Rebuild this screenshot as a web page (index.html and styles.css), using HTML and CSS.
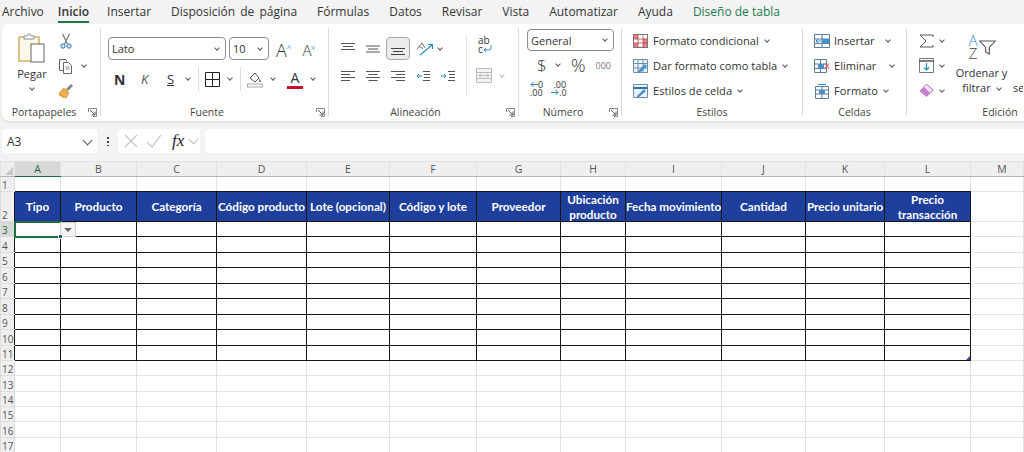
FILE: index.html
```html
<!DOCTYPE html>
<html>
<head>
    <title>Libro1 - Excel</title>
    <link rel="stylesheet" href="styles.css">
</head>
<body>
    <svg class="sprite" width="0" height="0">
        <symbol id="launcher" viewBox="0 0 9 9">
            <path d="M.5 4V.5h8v8H5" fill="none" stroke="#888"/>
            <path d="M2 2l5 5M7 3.5V7H3.5" fill="none" stroke="#555"/>
        </symbol>
    </svg>

    <nav class="tabs">
        <span class="tab">Archivo</span>
        <span class="tab active">Inicio</span>
        <span class="tab">Insertar</span>
        <span class="tab wide">Disposición de página</span>
        <span class="tab">Fórmulas</span>
        <span class="tab">Datos</span>
        <span class="tab">Revisar</span>
        <span class="tab">Vista</span>
        <span class="tab">Automatizar</span>
        <span class="tab">Ayuda</span>
        <span class="tab green">Diseño de tabla</span>
    </nav>

    <section class="ribbon">
        <div class="group g-clip">
            <div class="body clip-body">
                <div class="paste">
                    <svg width="28" height="30" viewBox="0 0 28 30">
                        <rect x="1" y="4" width="20" height="24" fill="#fdf8ec" stroke="#d8b36c" stroke-width="1.6"/>
                        <path d="M6 6V3h3a2 2 0 0 1 4 0h3v3z" fill="#fff" stroke="#8a8a8a"/>
                        <rect x="13" y="11" width="13" height="18" fill="#fff" stroke="#666"/>
                    </svg>
                    <span class="paste-text">Pegar</span>
                    <i class="chev"></i>
                </div>
                <div class="stack">
                    <div class="row-s cut">
                        <svg width="12" height="16" viewBox="0 0 12 16">
                            <path d="M2.500 1l5 10M9.500 1l-5 10" stroke="#777" stroke-width="1.200" fill="none"/>
                            <circle cx="3" cy="13" r="2.200" fill="#cfe2f3" stroke="#3a78b5"/>
                            <circle cx="9" cy="13" r="2.200" fill="#cfe2f3" stroke="#3a78b5"/>
                        </svg>
                    </div>
                    <div class="row-s">
                        <svg width="16" height="16" viewBox="0 0 16 16">
                            <path d="M5 12.500H1.500V1.500H8l1 2" fill="none" stroke="#666"/>
                            <path d="M5.500 4.500h5l3 3v8h-8z" fill="#fff" stroke="#666"/>
                            <path d="M7.500 9h4M7.500 11h4" stroke="#888"/>
                        </svg>
                        <i class="chev copy-chev"></i>
                    </div>
                    <div class="row-s">
                        <svg width="16" height="16" viewBox="0 0 16 16">
                            <path d="M1 10l5-5 5 5-3 5-2-1-1 1-1-2-2 0z" fill="#eeb04e" stroke="#c98a2c" stroke-width=".7"/>
                            <path d="M8 6l5-5 2 2-5 5z" fill="#888"/>
                        </svg>
                    </div>
                </div>
            </div>
            <div class="label">Portapapeles<svg class="launch"><use href="#launcher"/></svg></div>
        </div>

        <div class="group g-font">
            <div class="body">
                <div class="font-top">
                    <div class="combo font-name">Lato<i class="chev"></i></div>
                    <div class="combo font-size">10<i class="chev"></i></div>
                    <span class="grow-a">A<b class="up">^</b></span>
                    <span class="shrink-a">A<b class="down">^</b></span>
                </div>
                <div class="font-bottom">
                    <span class="t-n">N</span>
                    <span class="t-k">K</span>
                    <span class="t-s">S</span>
                    <i class="chev s-chev"></i>
                    <span class="vsep"></span>
                    <svg width="15" height="15" viewBox="0 0 15 15">
                        <path d="M.5.500h14v14H.5zM7.500.5v14M.5 7.500h14" fill="none" stroke="#222"/>
                    </svg>
                    <i class="chev"></i>
                    <span class="vsep"></span>
                    <svg width="16" height="17" viewBox="0 0 16 17">
                        <path d="M3 7l5-5 4 5-4 4z" fill="#fff" stroke="#555"/>
                        <path d="M12 7l2 3v1h-2z" fill="#777"/>
                        <rect x=".5" y="13" width="15" height="3" fill="#fff" stroke="#aaa"/>
                    </svg>
                    <i class="chev"></i>
                    <span class="t-color">A</span>
                    <i class="chev"></i>
                </div>
            </div>
            <div class="label">Fuente<svg class="launch"><use href="#launcher"/></svg></div>
        </div>

        <div class="group g-align">
            <div class="body align-body">
                <div class="align-main">
                    <div class="align-top">
                        <svg width="14" height="14" viewBox="0 0 14 14"><path d="M0 1.500h14M2 4.500h10M0 7.500h14" stroke="#555"/></svg>
                        <svg width="14" height="14" viewBox="0 0 14 14"><path d="M0 4h14M2 7h10M0 10h14" stroke="#555"/></svg>
                        <span class="selected">
                            <svg width="14" height="14" viewBox="0 0 14 14"><path d="M0 6.500h14M2 9.500h10M0 12.500h14" stroke="#444"/></svg>
                        </span>
                        <svg width="18" height="16" viewBox="0 0 18 16">
                            <path d="M1 8l5-6 3 5M3 5.500l4 2" fill="none" stroke="#777"/>
                            <path d="M4 14L16 4M12 3.500h4.500V8" fill="none" stroke="#2b8cc4" stroke-width="1.200"/>
                        </svg>
                        <i class="chev turn-chev"></i>
                    </div>
                    <div class="align-bottom">
                        <svg width="14" height="14" viewBox="0 0 14 14"><path d="M0 1.500h14M0 4.500h9M0 7.500h14M0 10.500h9" stroke="#555"/></svg>
                        <svg width="14" height="14" viewBox="0 0 14 14"><path d="M0 1.500h14M2.500 4.500h9M0 7.500h14M2.500 10.500h9" stroke="#555"/></svg>
                        <svg width="14" height="14" viewBox="0 0 14 14"><path d="M0 1.500h14M5 4.500h9M0 7.500h14M5 10.500h9" stroke="#555"/></svg>
                        <svg width="14" height="14" viewBox="0 0 14 14"><path d="M7 1.500h7M8 4.500h6M8 7.500h6M7 10.500h7" stroke="#555"/><path d="M6 6H1M3 4L1 6l2 2" fill="none" stroke="#2b8cc4"/></svg>
                        <svg width="14" height="14" viewBox="0 0 14 14"><path d="M7 1.500h7M8 4.500h6M8 7.500h6M7 10.500h7" stroke="#555"/><path d="M0 6h5M3 4l2 2-2 2" fill="none" stroke="#2b8cc4"/></svg>
                    </div>
                </div>
                <div class="align-side">
                    <span class="wrap-t">ab<br>c<svg width="9" height="8" viewBox="0 0 9 8"><path d="M8 0v3a2 2 0 0 1-2 2H1M3 3L1 5l2 2" fill="none" stroke="#2b8cc4"/></svg></span>
                    <div class="merge">
                        <svg width="16" height="15" viewBox="0 0 16 15">
                            <path d="M.5.500h15v14H.5zM.5 4.500h15M.5 10.500h15" fill="#f4f4f4" stroke="#bbb"/>
                            <path d="M3 7.500h10M5 5.500l-2 2 2 2M11 5.500l2 2-2 2" fill="none" stroke="#bbb"/>
                        </svg>
                        <i class="chev pale"></i>
                    </div>
                </div>
            </div>
            <div class="label">Alineación<svg class="launch"><use href="#launcher"/></svg></div>
        </div>

        <div class="group g-num">
            <div class="body">
                <div class="combo num-format">General<i class="chev"></i></div>
                <div class="num-row">
                    <span class="dollar">$</span>
                    <i class="chev"></i>
                    <span class="percent">%</span>
                    <span class="thousands">000</span>
                </div>
                <div class="num-row num-dec">
                    <span class="dec"><svg width="8" height="7" viewBox="0 0 8 7"><path d="M8 3.500H1M3.500 1L1 3.500 3.500 6" fill="none" stroke="#2b8cc4"/></svg><b>0</b><br>.00</span>
                    <span class="dec">&nbsp;.00<br><svg width="8" height="7" viewBox="0 0 8 7"><path d="M0 3.500h7M4.500 1L7 3.500 4.500 6" fill="none" stroke="#2b8cc4"/></svg><b>.0</b></span>
                </div>
            </div>
            <div class="label">Número<svg class="launch"><use href="#launcher"/></svg></div>
        </div>

        <div class="group g-styles">
            <div class="body list">
                <div class="list-row">
                    <svg width="15" height="14" viewBox="0 0 15 14">
                        <rect x=".5" y=".5" width="14" height="13" fill="#fff" stroke="#777"/>
                        <path d="M1 1h4v4H1zM10 5h4v8h-4zM1 9h4v4H1z" fill="#e8808c"/>
                        <path d="M5 .5v13M10 .5v13M.5 5h14M.5 9h14" stroke="#a33" stroke-width=".7"/>
                    </svg>
                    Formato condicional<i class="chev"></i>
                </div>
                <div class="list-row">
                    <svg width="15" height="14" viewBox="0 0 15 14">
                        <path d="M.5.500h14v13H.5zM.5 4.500h14M.5 9h14M5 .5v13M10 .5v13" fill="#eaf3fa" stroke="#6f8ea5"/>
                        <path d="M5 12l7-7 2 2-7 7H5z" fill="#4b90c8"/>
                    </svg>
                    Dar formato como tabla<i class="chev"></i>
                </div>
                <div class="list-row">
                    <svg width="15" height="14" viewBox="0 0 15 14">
                        <path d="M.5.500h14v13H.5z" fill="#eaf3fa" stroke="#6f8ea5"/>
                        <path d="M.5 4h14" stroke="#2f6ea8" stroke-width="2"/>
                        <path d="M4 12l7-7 2 2-7 6H4z" fill="#4b90c8"/>
                    </svg>
                    Estilos de celda<i class="chev"></i>
                </div>
            </div>
            <div class="label">Estilos</div>
        </div>

        <div class="group g-cells">
            <div class="body list">
                <div class="list-row">
                    <svg width="16" height="14" viewBox="0 0 16 14">
                        <path d="M.5.500h15v13H.5zM.5 5h15M.5 9.500h15M8 .5v13" fill="#fff" stroke="#5b7f96"/>
                        <rect x="8" y="5" width="7" height="4.500" fill="#4b90c8"/>
                        <path d="M7 7H2M4 5L2 7l2 2" fill="none" stroke="#2b8cc4"/>
                    </svg>
                    <span class="cell-name c-ins">Insertar</span><i class="chev"></i>
                </div>
                <div class="list-row">
                    <svg width="16" height="14" viewBox="0 0 16 14">
                        <path d="M.5.500h12v13H.5zM.5 5h12M.5 9.500h12M6.500 .5v13" fill="#fff" stroke="#5b7f96"/>
                        <rect x="4" y="5" width="6" height="4.500" fill="#4b90c8"/>
                        <path d="M11 4.500l4 5M15 4.500l-4 5" stroke="#e0506a" stroke-width="1.200"/>
                    </svg>
                    <span class="cell-name c-del">Eliminar</span><i class="chev"></i>
                </div>
                <div class="list-row">
                    <svg width="16" height="16" viewBox="0 0 16 16">
                        <path d="M1.500 3.500h13v12h-13zM1.500 7h13M1.500 11h13M8 3.500v12" fill="#fff" stroke="#5b7f96"/>
                        <rect x="5" y="7" width="6" height="4" fill="#4b90c8"/>
                        <path d="M4 1.500h8" stroke="#2b8cc4"/>
                    </svg>
                    <span class="cell-name c-fmt">Formato</span><i class="chev"></i>
                </div>
            </div>
            <div class="label">Celdas</div>
        </div>

        <div class="group g-edit">
            <div class="body edit-body">
                <div class="stack edit-stack">
                    <div class="row-s edit-row">
                        <svg width="15" height="14" viewBox="0 0 15 14"><path d="M14 3V1H1l6 6-6 6h13v-2" fill="none" stroke="#555"/></svg>
                        <i class="chev"></i>
                    </div>
                    <div class="row-s edit-row">
                        <svg width="15" height="15" viewBox="0 0 15 15">
                            <path d="M.5.500h14v14H.5z" fill="#fff" stroke="#777"/>
                            <path d="M.5 3h14" stroke="#555" stroke-width="1.500"/>
                            <path d="M7.500 5v7M5 9.500l2.500 2.500L10 9.500" fill="none" stroke="#2b8cc4" stroke-width="1.200"/>
                        </svg>
                        <i class="chev"></i>
                    </div>
                    <div class="row-s edit-row">
                        <svg width="16" height="15" viewBox="0 0 16 15">
                            <path d="M1 8l7-7 7 6-7 7z" fill="#c97fd0" stroke="#a75cae" stroke-width=".7"/>
                            <path d="M8 1l7 6-3.500 3.500L5 4z" fill="#f4e3f5" stroke="#a75cae" stroke-width=".7"/>
                        </svg>
                        <i class="chev"></i>
                    </div>
                </div>
                <div class="sort">
                    <div class="sort-icon">
                        <span class="az"><span class="sort-a">A</span><span class="sort-z">Z</span></span>
                        <svg width="17" height="15" viewBox="0 0 17 15">
                            <path d="M.7 1h15.600l-6 6.500v6.500l-3.600-2V7.500z" fill="#fff" stroke="#555" stroke-width="1.100"/>
                        </svg>
                    </div>
                    <span class="sort-text">Ordenar y</span>
                    <span class="sort-text">filtrar<i class="chev"></i></span>
                </div>
                <span class="cut-text">se</span>
            </div>
            <div class="label">Edición</div>
        </div>
    </section>

    <section class="formula">
        <div class="namebox">A3<i class="chev big"></i></div>
        <span class="dots"></span>
        <div class="fx-box">
            <svg width="14" height="14" viewBox="0 0 14 14"><path d="M1 1l12 12M13 1L1 13" stroke="#c4c4c4" stroke-width="1.200"/></svg>
            <svg width="16" height="14" viewBox="0 0 16 14"><path d="M1 8l5 5L15 1" fill="none" stroke="#c4c4c4" stroke-width="1.200"/></svg>
            <span class="fx">fx</span>
            <i class="chev big pale"></i>
        </div>
        <div class="fx-input"></div>
    </section>

    <table class="sheet">
        <colgroup>
            <col class="c0"><col class="c1"><col class="c2"><col class="c3"><col class="c4"><col class="c5"><col class="c6">
            <col class="c7"><col class="c8"><col class="c9"><col class="c10"><col class="c11"><col class="c12"><col>
        </colgroup>
        <tr class="letters">
            <td class="corner"><i></i></td><td class="on">A</td><td>B</td><td>C</td><td>D</td><td>E</td><td>F</td><td>G</td><td>H</td><td>I</td><td>J</td><td>K</td><td>L</td><td class="col-m">M</td>
        </tr>
        <tr class="r15 above"><td class="rh">1</td><td></td><td></td><td></td><td></td><td></td><td></td><td></td><td></td><td></td><td></td><td></td><td></td><td class="m"></td></tr>
        <tr class="r30 data">
            <td class="rh">2</td>
            <th>Tipo</th><th>Producto</th><th>Categoría</th><th class="one-line">Código producto</th><th class="one-line">Lote (opcional)</th><th>Código y lote</th><th>Proveedor</th>
            <th>Ubicación producto</th><th class="one-line">Fecha movimiento</th><th>Cantidad</th><th class="one-line">Precio unitario</th><th>Precio transacción</th>
            <td class="m"></td>
        </tr>
        <tr class="r15 data"><td class="rh on">3</td><td class="active"><span class="filter"><i></i></span><span class="handle"></span></td><td></td><td></td><td></td><td></td><td></td><td></td><td></td><td></td><td></td><td></td><td></td><td class="m"></td></tr>
        <tr class="r16 data"><td class="rh">4</td><td></td><td></td><td></td><td></td><td></td><td></td><td></td><td></td><td></td><td></td><td></td><td></td><td class="m"></td></tr>
        <tr class="r15 data"><td class="rh">5</td><td></td><td></td><td></td><td></td><td></td><td></td><td></td><td></td><td></td><td></td><td></td><td></td><td class="m"></td></tr>
        <tr class="r16 data"><td class="rh">6</td><td></td><td></td><td></td><td></td><td></td><td></td><td></td><td></td><td></td><td></td><td></td><td></td><td class="m"></td></tr>
        <tr class="r15 data"><td class="rh">7</td><td></td><td></td><td></td><td></td><td></td><td></td><td></td><td></td><td></td><td></td><td></td><td></td><td class="m"></td></tr>
        <tr class="r16 data"><td class="rh">8</td><td></td><td></td><td></td><td></td><td></td><td></td><td></td><td></td><td></td><td></td><td></td><td></td><td class="m"></td></tr>
        <tr class="r15 data"><td class="rh">9</td><td></td><td></td><td></td><td></td><td></td><td></td><td></td><td></td><td></td><td></td><td></td><td></td><td class="m"></td></tr>
        <tr class="r16 data"><td class="rh">10</td><td></td><td></td><td></td><td></td><td></td><td></td><td></td><td></td><td></td><td></td><td></td><td></td><td class="m"></td></tr>
        <tr class="r15 data"><td class="rh">11</td><td></td><td></td><td></td><td></td><td></td><td></td><td></td><td></td><td></td><td></td><td></td><td class="corner-cell"><span class="resize"></span></td><td class="m"></td></tr>
        <tr class="r15"><td class="rh">12</td><td></td><td></td><td></td><td></td><td></td><td></td><td></td><td></td><td></td><td></td><td></td><td></td><td></td></tr>
        <tr class="r16"><td class="rh">13</td><td></td><td></td><td></td><td></td><td></td><td></td><td></td><td></td><td></td><td></td><td></td><td></td><td></td></tr>
        <tr class="r15"><td class="rh">14</td><td></td><td></td><td></td><td></td><td></td><td></td><td></td><td></td><td></td><td></td><td></td><td></td><td></td></tr>
        <tr class="r15"><td class="rh">15</td><td></td><td></td><td></td><td></td><td></td><td></td><td></td><td></td><td></td><td></td><td></td><td></td><td></td></tr>
        <tr class="r16"><td class="rh">16</td><td></td><td></td><td></td><td></td><td></td><td></td><td></td><td></td><td></td><td></td><td></td><td></td><td></td></tr>
        <tr class="r15"><td class="rh">17</td><td></td><td></td><td></td><td></td><td></td><td></td><td></td><td></td><td></td><td></td><td></td><td></td><td></td></tr>
    </table>
</body>
</html>
```

FILE: styles.css
```css
* {
    box-sizing: border-box;
}

html, body {
    height: 100%;
}

body {
    margin: 0;
    background: #f3f3f3;
    font-family: "Open Sans", "Liberation Sans", sans-serif;
    font-size: 11.1px;
    color: #333;
    overflow: hidden;
}

.sprite {
    display: block;
    height: 0;
}

/* tabs */
.tabs {
    display: flex;
    height: 24px;
    padding-left: 2px;
    gap: 20px;
    align-items: center;
    font-size: 12px;
    background: #f3f3f3;
}

.tab {
    position: relative;
    white-space: nowrap;
    line-height: 22px;
}

.tab.active {
    margin: 0 -2px 0 -6px;
    font-weight: 600;
}

.tab.wide {
    word-spacing: 2px;
}

.tab.active::after {
    content: "";
    position: absolute;
    left: 0;
    right: 0;
    bottom: 0;
    height: 2px;
    background: #217346;
}

.tab.green {
    color: #1f7a4d;
}

/* ribbon */
.ribbon {
    display: flex;
    height: 97px;
    margin-left: 2px;
    padding-top: 4px;
    background: #fff;
    border-radius: 7px 0 0 7px;
    box-shadow: 0 1px 2px rgba(0, 0, 0, 0.12);
}

.group {
    display: flex;
    flex-direction: column;
    height: 88px;
    border-right: 1px solid #dcdcdc;
}

.g-clip { width: 99px; }
.g-font { width: 228px; }
.g-align { width: 190px; }
.g-num { width: 103px; }
.g-styles { width: 181px; }
.g-cells { width: 104px; }
.g-edit { width: 116px; border-right: 0; overflow: hidden; }

.g-clip .label { padding-right: 14px; }
.g-font .label { padding-right: 15px; }
.g-align .label { padding-right: 16px; }
.g-num .label { padding-right: 14px; }
.g-edit .label { padding-left: 70px; }

.body {
    height: 75px;
}

.label {
    position: relative;
    height: 13px;
    line-height: 18px;
    font-size: 10.5px;
    text-align: center;
    color: #444;
}

.launch {
    position: absolute;
    right: 3px;
    top: 5px;
    width: 9px;
    height: 9px;
}

.chev {
    display: inline-block;
    width: 4px;
    height: 4px;
    margin: 0 0 2px 4px;
    border-right: 1px solid #555;
    border-bottom: 1px solid #555;
    transform: rotate(45deg);
    flex: none;
}

.chev.pale {
    border-color: #bbb;
}

.chev.big {
    width: 7px;
    height: 7px;
}

/* portapapeles */
.clip-body {
    display: flex;
    padding-left: 10px;
}

.paste {
    display: flex;
    flex-direction: column;
    align-items: center;
    width: 40px;
    padding-top: 5px;
}

.paste-text {
    margin-top: 3px;
    line-height: 16px;
}

.paste .chev {
    margin: 4px 0 0;
}

.stack {
    display: flex;
    flex-direction: column;
}

.clip-body .stack {
    margin-left: 6px;
}

.row-s {
    display: flex;
    align-items: center;
    height: 25px;
}

.cut {
    padding-left: 2px;
}

.copy-chev {
    margin-left: 8px;
}

/* fuente */
.g-font .body {
    padding: 9px 0 0 7px;
}

.font-top {
    display: flex;
    align-items: center;
    gap: 3px;
}

.combo {
    display: flex;
    align-items: center;
    justify-content: space-between;
    height: 23px;
    padding: 0 6px 0 3px;
    background: #fff;
    border: 1px solid #8d8d8d;
    border-radius: 4px;
    font-size: 11px;
}

.font-name {
    width: 118px;
}

.font-size {
    width: 40px;
}

.grow-a, .shrink-a {
    line-height: 20px;
    font-weight: 300;
    white-space: nowrap;
}

.grow-a {
    margin-left: 4px;
    font-size: 18px;
}

.shrink-a {
    margin-left: 8px;
    font-size: 15px;
}

.up, .down {
    display: inline-block;
    font-size: 8px;
    font-weight: 400;
    vertical-align: 6px;
    color: #2b8cc4;
}

.down {
    transform: rotate(180deg);
}

.font-bottom {
    display: flex;
    align-items: center;
    height: 22px;
    margin-top: 8px;
    padding-left: 6px;
}

.t-n {
    width: 27px;
    font-size: 14px;
    font-weight: 700;
}

.t-k {
    width: 26px;
    font-size: 13px;
    font-style: italic;
    color: #555;
}

.t-s {
    width: 15px;
    font-size: 13px;
    text-decoration: underline;
}

.vsep {
    width: 1px;
    height: 24px;
    margin: 0 6px 0 8px;
    background: #dcdcdc;
}

.font-bottom .chev {
    margin-left: 8px;
}

.font-bottom .s-chev {
    margin-left: 4px;
}

.t-color {
    width: 16px;
    margin-left: 12px;
    font-size: 14px;
    line-height: 17px;
    text-align: center;
    border-bottom: 3px solid #c8102e;
}

/* alineacion */
.align-body {
    display: flex;
    padding-left: 12px;
}

.align-main {
    width: 125px;
    padding-top: 9px;
}

.align-top {
    display: flex;
    align-items: center;
    gap: 11px;
    height: 23px;
}

.selected {
    display: flex;
    align-items: center;
    justify-content: center;
    width: 24px;
    height: 23px;
    margin: 0 -5px 0 -5px;
    background: #ececec;
    border: 1px solid #a8a8a8;
    border-radius: 4px;
}

.turn-chev {
    margin-left: -7px;
}

.align-bottom {
    display: flex;
    align-items: center;
    gap: 11px;
    height: 22px;
    margin-top: 6px;
}

.align-side {
    display: flex;
    flex-direction: column;
    height: 60px;
    margin-top: 8px;
    padding-left: 9px;
    border-left: 1px solid #e4e4e4;
}

.wrap-t {
    font-size: 10px;
    line-height: 9px;
    padding-left: 2px;
}

.merge {
    display: flex;
    align-items: center;
    margin-top: 14px;
}

.merge .chev {
    margin-left: 8px;
}

/* numero */
.g-num .body {
    padding: 1px 0 0 8px;
}

.num-format {
    width: 87px;
    height: 22px;
}

.num-row {
    display: flex;
    align-items: center;
    height: 20px;
    margin-top: 4px;
    padding-left: 10px;
}

.dollar {
    width: 15px;
    font-size: 17px;
    font-weight: 300;
}

.percent {
    margin-left: 11px;
    font-size: 18px;
    font-weight: 300;
}

.thousands {
    margin-left: 10px;
    font-size: 9px;
    color: #777;
}

.num-dec {
    gap: 8px;
    padding-left: 3px;
}

.dec {
    font-size: 9px;
    line-height: 8px;
    white-space: nowrap;
}

.dec b {
    font-weight: 400;
}

/* estilos y celdas */
.list {
    display: flex;
    flex-direction: column;
}

.list-row {
    display: flex;
    align-items: center;
    gap: 5px;
    height: 25px;
    padding-left: 11px;
    white-space: nowrap;
}

.list-row .chev {
    margin-left: 1px;
}

.g-cells .list-row {
    gap: 4px;
}

.c-ins {
    width: 47px;
}

.c-del {
    width: 51px;
}

.c-fmt {
    width: 45px;
}

/* edicion */
.edit-body {
    display: flex;
    padding-left: 12px;
}

.edit-stack {
    width: 37px;
    flex: none;
}

.edit-row svg {
    width: 15px;
}

.edit-row .chev {
    margin-left: 6px;
}

.sort {
    display: flex;
    flex-direction: column;
    align-items: center;
    width: 51px;
    flex: none;
    padding-top: 6px;
    line-height: 15px;
    font-size: 11px;
    white-space: nowrap;
}

.sort-icon {
    display: flex;
    align-items: center;
    height: 26px;
    margin-bottom: 5px;
}

.az {
    display: flex;
    flex-direction: column;
    align-items: center;
    width: 11px;
    font-size: 15px;
    font-weight: 300;
    line-height: 13px;
}

.sort-a {
    color: #2b8cc4;
}

.sort-z {
    color: #444;
}

.sort .chev {
    margin-left: 6px;
}

.cut-text {
    margin: 52px 0 0 6px;
    font-size: 11px;
    line-height: 15px;
}

/* barra de formulas */
.formula {
    display: flex;
    align-items: center;
    height: 40px;
    padding: 0 0 0 2px;
}

.namebox {
    display: flex;
    align-items: center;
    justify-content: space-between;
    width: 95px;
    height: 24px;
    padding: 0 6px 0 5px;
    background: #fff;
    border-radius: 4px;
    font-size: 12px;
}

.dots {
    width: 2px;
    height: 10px;
    margin: 0 9px 0 10px;
    background: radial-gradient(circle, #444 1px, transparent 1.2px) 0 0 / 2px 4px;
}

.fx-box {
    display: flex;
    align-items: center;
    gap: 8px;
    width: 82px;
    height: 24px;
    padding-left: 6px;
    background: #fff;
    border-radius: 4px;
}

.fx {
    width: 12px;
    margin-left: 2px;
    font-family: "Liberation Serif", serif;
    font-size: 17px;
    font-style: italic;
    color: #222;
}

.fx-box .chev {
    margin: 0 0 3px -2px;
}

.fx-input {
    flex: 1;
    height: 24px;
    margin-left: 5px;
    background: #fff;
    border-radius: 4px 0 0 4px;
}

/* hoja */
.sheet {
    width: 1024px;
    table-layout: fixed;
    border-collapse: collapse;
    background: #fff;
}

.c0 { width: 14px; }
.c1 { width: 46px; }
.c2 { width: 76px; }
.c3 { width: 80px; }
.c4 { width: 90px; }
.c5 { width: 83px; }
.c6 { width: 87px; }
.c7 { width: 84px; }
.c8 { width: 65px; }
.c9 { width: 96px; }
.c10 { width: 84px; }
.c11 { width: 79px; }
.c12 { width: 86px; }

.sheet td, .sheet th {
    padding: 0;
    border: 1px solid #e2e2e2;
}

.letters td {
    height: 15px;
    background: #efefef;
    border-color: #e2e2e2 #e2e2e2 #b5b5b5;
    font-size: 10.5px;
    line-height: 13px;
    text-align: center;
    color: #555;
}

.letters .on {
    background: #d8d8d8;
    border-bottom: 1px solid #1f6e43;
    color: #1f6e43;
}

.letters .col-m {
    padding-left: 10px;
}

.corner {
    position: relative;
}

.corner i {
    position: absolute;
    right: 1px;
    bottom: 1px;
    border-left: 8px solid transparent;
    border-bottom: 8px solid #c8c8c8;
}

.r15 { height: 15px; }
.r16 { height: 16px; }
.r30 { height: 30px; }

.sheet .rh {
    background: #efefef;
    border-color: #dcdcdc;
    padding-left: 1px;
    font-size: 10px;
    line-height: 11px;
    color: #555;
    vertical-align: bottom;
    overflow: hidden;
}

.sheet .rh.on {
    background: #d8d8d8;
    color: #1f6e43;
}

.above td:not(.rh):not(.m) {
    border-bottom-color: #161616;
}

.data td:not(.rh):not(.m),
.data th {
    border-color: #161616;
}

.sheet .data .rh {
    border-right-color: #161616;
}

.sheet th {
    background: #1f3f9c;
    font-family: Lato, "Liberation Sans", sans-serif;
    font-size: 11.7px;
    font-weight: 700;
    line-height: 14.5px;
    color: #fff;
    text-align: center;
}

.sheet th.one-line {
    white-space: nowrap;
}

.sheet td.active {
    position: relative;
    outline: 2px solid #1f6e43;
    outline-offset: -1px;
    border-color: #1f6e43;
}

.filter {
    position: absolute;
    left: 100%;
    top: 0;
    display: flex;
    align-items: center;
    justify-content: center;
    width: 16px;
    height: 15px;
    background: #f4f4f4;
    border: 1px solid #d0d0d0;
}

.filter i {
    border-left: 4px solid transparent;
    border-right: 4px solid transparent;
    border-top: 4px solid #666;
}

.handle {
    position: absolute;
    right: -3px;
    bottom: -3px;
    width: 5px;
    height: 5px;
    background: #1f6e43;
    border: 1px solid #fff;
}

.corner-cell {
    position: relative;
}

.resize {
    position: absolute;
    right: 0;
    bottom: 0;
    border-left: 4px solid transparent;
    border-bottom: 4px solid #3b3f8c;
}
```
